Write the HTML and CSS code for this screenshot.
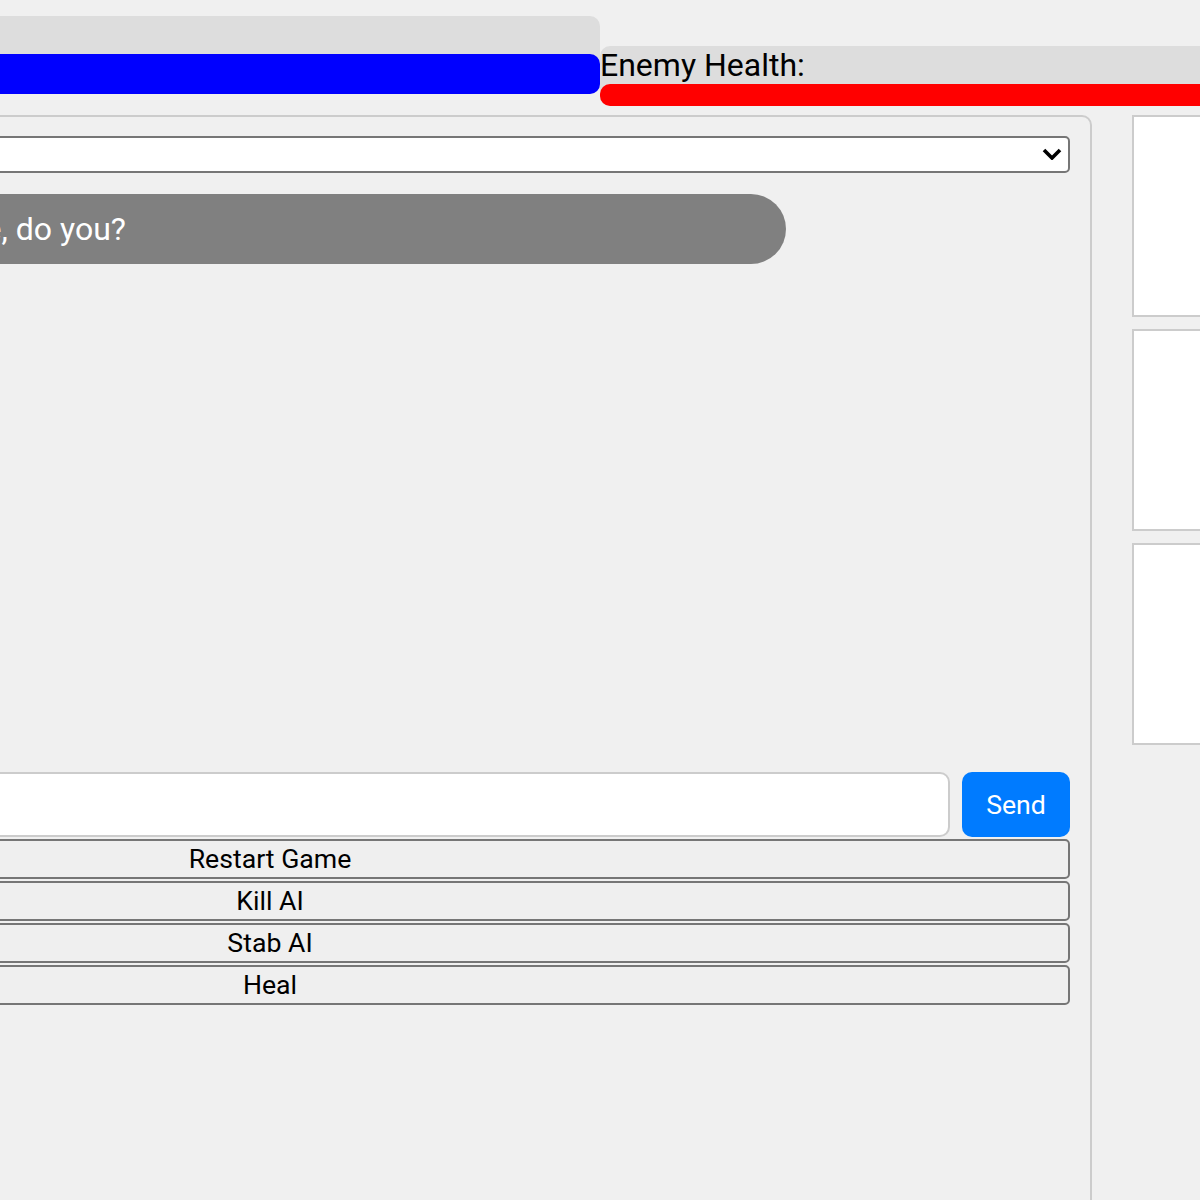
FILE: index.html
```html
<!DOCTYPE html>
<html lang="en">
<head>
  <meta charset="UTF-8" />
  <title>AI Fight Chat</title>
  <link rel="stylesheet" href="styles.css">
</head>
<body>

<div class="page">
  <div class="health-row">
    <div class="health player">
      <div class="health-label">Player Health:</div>
      <div class="health-bar player-bar" style="width: 100%;"></div>
    </div>
    <div class="health enemy">
      <div class="health-label">Enemy Health:</div>
      <div class="health-bar enemy-bar" style="width: 100%;"></div>
    </div>
  </div>

  <div class="main">
    <div class="chat-panel">
      <div class="select-wrap">
        <select class="personality">
          <option>Default AI</option>
        </select>
        <svg class="select-arrow" width="20" height="12" viewBox="0 0 20 12">
          <path d="M2 2 L10 10 L18 2" fill="none" stroke="#000" stroke-width="3.6" />
        </svg>
      </div>

      <div class="messages">
        <div class="message ai">You do not actually want to fight me, do you?</div>
      </div>

      <div class="input-row">
        <input type="text" class="chat-input" />
        <button class="send-btn">Send</button>
      </div>
      <button class="action-btn">Restart Game</button>
      <button class="action-btn">Kill AI</button>
      <button class="action-btn">Stab AI</button>
      <button class="action-btn">Heal</button>
    </div>

    <div class="sidebar">
      <div class="side-box"></div>
      <div class="side-box"></div>
      <div class="side-box"></div>
    </div>
  </div>
</div>

</body>
</html>
```

FILE: styles.css
```css
html, body {
  margin: 0;
  overflow: hidden;
}
body {
  background: #f0f0f0;
  font-family: Roboto, "Liberation Sans", sans-serif;
  color: #000;
}
.page {
  margin-left: -552px;
  width: 2304px;
}

/* health bars */
.health-row {
  display: flex;
  align-items: flex-start;
}
.health {
  flex: 1;
  background: #ddd;
  border-radius: 10px;
}
.player { margin-top: 16px; }
.enemy { margin-top: 46px; }
.health-label {
  font-size: 32px;
  line-height: 38px;
}
.health-bar { border-radius: 10px; }
.player-bar { height: 40px; background: #0000ff; }
.enemy-bar { height: 22px; background: #ff0000; }

/* main area */
.main {
  display: flex;
  gap: 40px;
  margin-top: 9px;
}
.chat-panel {
  box-sizing: border-box;
  width: 1644px;
  height: 1100px;
  border: 2px solid #ccc;
  border-radius: 10px;
  padding: 19px 20px 20px;
}
.select-wrap { position: relative; }
.personality {
  appearance: none;
  box-sizing: border-box;
  display: block;
  width: 100%;
  height: 37px;
  background: #fff;
  border: 2px solid #767676;
  border-radius: 5px;
  font-family: inherit;
  font-size: 26px;
}
.select-arrow {
  position: absolute;
  right: 8px;
  top: 12px;
  pointer-events: none;
}
.messages {
  box-sizing: border-box;
  height: 578px;
  margin-top: 21px;
}
.message {
  width: 80%;
  padding: 16px 14px 16px 22px;
  font-size: 32px;
  line-height: 38px;
  border-radius: 40px;
  white-space: nowrap;
}
.message.ai { background: #808080; color: #fff; }

.input-row {
  display: flex;
  gap: 12px;
  height: 65px;
}
.chat-input {
  flex: 1;
  box-sizing: border-box;
  height: 65px;
  border: 2px solid #ccc;
  border-radius: 10px;
  background: #fff;
}
.send-btn {
  width: 108px;
  border: none;
  border-radius: 10px;
  background: #007bff;
  color: #fff;
  font-family: inherit;
  font-size: 26.67px;
}
.action-btn {
  display: block;
  box-sizing: border-box;
  width: 100%;
  height: 40px;
  margin-top: 2px;
  padding: 0;
  background: #efefef;
  border: 2px solid #767676;
  border-radius: 5px;
  font-family: inherit;
  font-size: 26.67px;
  color: #000;
}

/* side panel */
.sidebar {
  flex: 1;
  display: flex;
  flex-direction: column;
  gap: 12px;
}
.side-box {
  box-sizing: border-box;
  height: 202px;
  background: #fff;
  border: 2px solid #ccc;
}
```
